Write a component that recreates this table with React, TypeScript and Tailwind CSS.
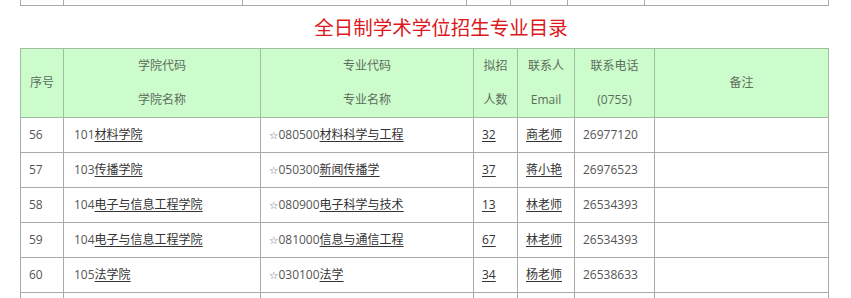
import React from 'react';

interface Row {
  no: number;
  collegeCode: string;
  college: string;
  majorCode: string;
  major: string;
  quota: number;
  contact: string;
  phone: string;
}

const rows: Row[] = [
  { no: 56, collegeCode: '101', college: '材料学院', majorCode: '080500', major: '材料科学与工程', quota: 32, contact: '商老师', phone: '26977120' },
  { no: 57, collegeCode: '103', college: '传播学院', majorCode: '050300', major: '新闻传播学', quota: 37, contact: '蒋小艳', phone: '26976523' },
  { no: 58, collegeCode: '104', college: '电子与信息工程学院', majorCode: '080900', major: '电子科学与技术', quota: 13, contact: '林老师', phone: '26534393' },
  { no: 59, collegeCode: '104', college: '电子与信息工程学院', majorCode: '081000', major: '信息与通信工程', quota: 67, contact: '林老师', phone: '26534393' },
  { no: 60, collegeCode: '105', college: '法学院', majorCode: '030100', major: '法学', quota: 34, contact: '杨老师', phone: '26538633' },
];

const font = { fontFamily: '"Open Sans", "Noto Sans CJK SC", sans-serif' };

const th = 'border border-[#9fbf9f] bg-[#ccfccc] text-[#5c6c5c] font-normal text-center align-middle text-[12px]';
const td = 'border border-[#a9a9a9] text-[#555] text-[12px] align-middle px-2 h-[35px] whitespace-nowrap';
const link = 'text-[#333] underline underline-offset-2';

const App: React.FC = () => {
  return (
    <div className="bg-white w-[851px] h-[298px] overflow-hidden" style={font}>
      {/* tail of the previous table */}
      <div className="ml-[20px] w-[809px] h-[6px] flex border-x border-b border-[#a9a9a9]">
        <div className="w-[43px] border-r border-[#a9a9a9]" />
        <div className="w-[179px] border-r border-[#a9a9a9]" />
        <div className="w-[224px] border-r border-[#a9a9a9]" />
        <div className="w-[44px] border-r border-[#a9a9a9]" />
        <div className="w-[57px] border-r border-[#a9a9a9]" />
        <div className="w-[77px] border-r border-[#a9a9a9]" />
        <div className="flex-1" />
      </div>

      <h2 className="text-center pl-[31px] pt-[8px] h-[42px] text-[19.5px] leading-[28px] text-[#dc1820]">
        全日制学术学位招生专业目录
      </h2>

      <table className="ml-[20px] w-[809px] table-fixed border-collapse">
        <colgroup>
          <col className="w-[43px]" />
          <col className="w-[197px]" />
          <col className="w-[213px]" />
          <col className="w-[44px]" />
          <col className="w-[57px]" />
          <col className="w-[80px]" />
          <col />
        </colgroup>
        <thead>
          <tr className="h-[68px]">
            <th className={th}>序号</th>
            <th className={th}>
              <div className="leading-[34px]">学院代码</div>
              <div className="leading-[34px]">学院名称</div>
            </th>
            <th className={th}>
              <div className="leading-[34px]">专业代码</div>
              <div className="leading-[34px]">专业名称</div>
            </th>
            <th className={th}>
              <div className="leading-[34px]">拟招</div>
              <div className="leading-[34px]">人数</div>
            </th>
            <th className={th}>
              <div className="leading-[34px]">联系人</div>
              <div className="leading-[34px]">Email</div>
            </th>
            <th className={th}>
              <div className="leading-[34px]">联系电话</div>
              <div className="leading-[34px]">(0755)</div>
            </th>
            <th className={th}>备注</th>
          </tr>
        </thead>
        <tbody>
          {rows.map((r) => (
            <tr key={r.no}>
              <td className={td}>{r.no}</td>
              <td className={td + ' pl-[10px]'}>
                {r.collegeCode}
                <span className={link}>{r.college}</span>
              </td>
              <td className={td}>
                <span className="text-[10.5px] text-[#666]" style={{ fontFamily: '"DejaVu Sans", sans-serif' }}>☆</span>
                {r.majorCode}
                <span className={link}>{r.major}</span>
              </td>
              <td className={td}>
                <span className={link}>{r.quota}</span>
              </td>
              <td className={td}>
                <span className={link}>{r.contact}</span>
              </td>
              <td className={td}>{r.phone}</td>
              <td className={td}></td>
            </tr>
          ))}
          <tr>
            <td className={td}></td>
            <td className={td}></td>
            <td className={td}></td>
            <td className={td}></td>
            <td className={td}></td>
            <td className={td}></td>
            <td className={td}></td>
          </tr>
        </tbody>
      </table>
    </div>
  );
};

export default App;
